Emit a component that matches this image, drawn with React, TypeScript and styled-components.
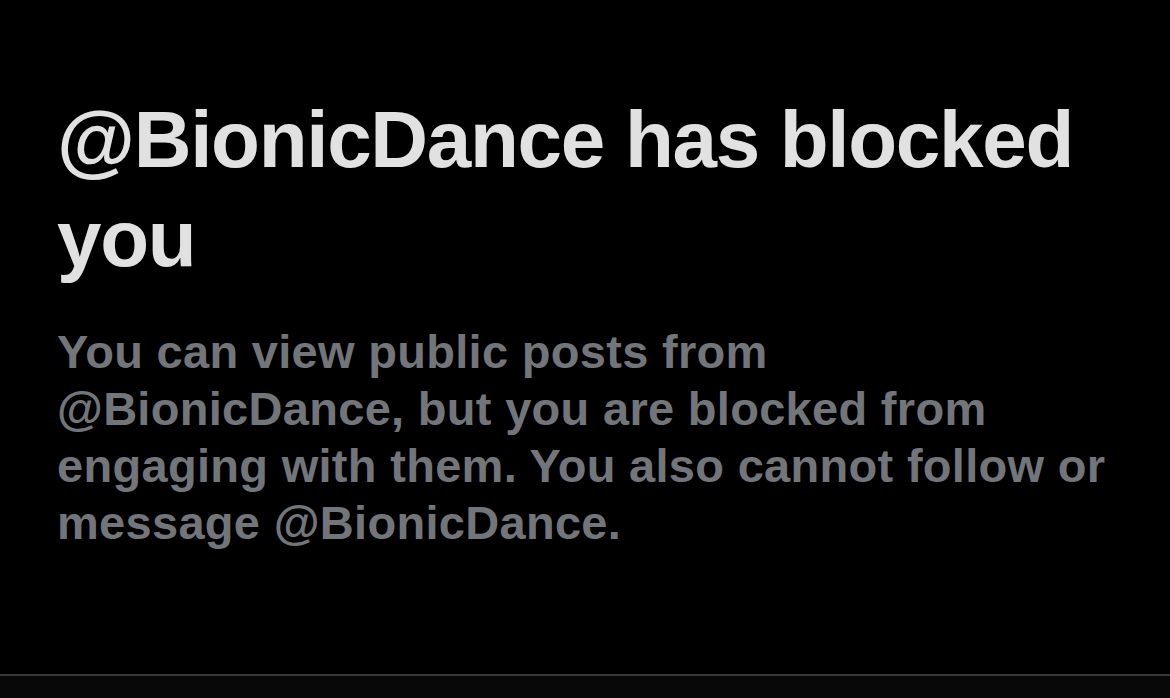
import React from "react";
import styled, { createGlobalStyle } from "styled-components";

const Global = createGlobalStyle`
  html, body {
    margin: 0;
    padding: 0;
    background: #000;
  }
  #root {
    min-height: 100vh;
  }
`;

const Screen = styled.div`
  display: flex;
  flex-direction: column;
  width: 1170px;
  height: 698px;
  background: #000;
  font-family: "Liberation Sans", Arial, sans-serif;
  overflow: hidden;
`;

const Notice = styled.section`
  display: flex;
  flex-direction: column;
  gap: 35px;
  padding: 90px 53px 0 57px;
  flex: 1;
`;

const Title = styled.h1`
  margin: 0;
  font-size: 80px;
  line-height: 99px;
  font-weight: 700;
  letter-spacing: -1.3px;
  color: #e1e1e1;
`;

const Body = styled.p`
  margin: 0;
  font-size: 47px;
  line-height: 57px;
  font-weight: 700;
  letter-spacing: 0.3px;
  color: #72767b;
`;

const Footer = styled.div`
  height: 22px;
  border-top: 2px solid #37383a;
  background: #080808;
`;

export default function App() {
  return (
    <>
      <Global />
      <Screen>
        <Notice>
          <Title>@BionicDance has blocked you</Title>
          <Body>
            You can view public posts from @BionicDance, but you are blocked
            from engaging with them. You also cannot follow or message
            @BionicDance.
          </Body>
        </Notice>
        <Footer />
      </Screen>
    </>
  );
}
